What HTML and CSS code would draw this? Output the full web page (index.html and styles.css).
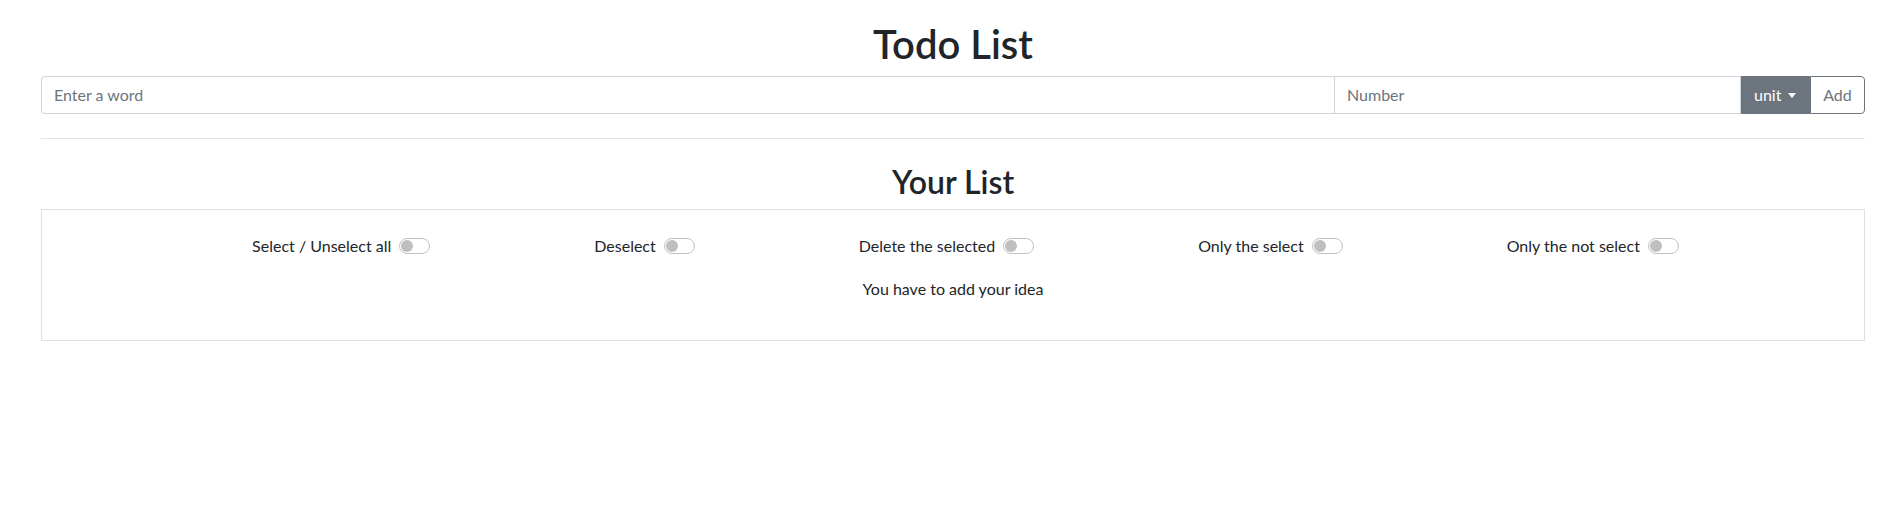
FILE: index.html
```html
<!DOCTYPE html>
<html lang="en">
<head>
<meta charset="utf-8">
<title>Todo List</title>
<link rel="stylesheet" href="styles.css">
</head>
<body>
<div class="container">
  <h1 class="title">Todo List</h1>
  <form class="input-group">
    <input class="form-control word" type="text" placeholder="Enter a word">
    <input class="form-control number" type="text" placeholder="Number">
    <button type="button" class="btn btn-unit">unit<span class="caret"></span></button>
    <button type="button" class="btn btn-add">Add</button>
  </form>
  <hr class="divider">
  <h2 class="subtitle">Your List</h2>
  <div class="card">
    <div class="controls">
      <label class="switch-item">Select / Unselect all <span class="switch"><span class="knob"></span></span></label>
      <label class="switch-item">Deselect <span class="switch"><span class="knob"></span></span></label>
      <label class="switch-item">Delete the selected <span class="switch"><span class="knob"></span></span></label>
      <label class="switch-item">Only the select <span class="switch"><span class="knob"></span></span></label>
      <label class="switch-item">Only the not select <span class="switch"><span class="knob"></span></span></label>
    </div>
    <p class="empty">You have to add your idea</p>
  </div>
</div>
</body>
</html>
```
FILE: styles.css
```css
* { box-sizing: border-box; }
html, body { margin: 0; padding: 0; background: #fff; }
body {
  font-family: Lato, "Liberation Sans", sans-serif;
  font-size: 16px;
  line-height: 24px;
  color: #212529;
}
.container {
  padding: 20px 20px 0 41px;
}
.title {
  margin: 0 0 8px;
  font-size: 40px;
  line-height: 48px;
  font-weight: 600;
  text-align: center;
}
.input-group {
  display: flex;
  height: 38px;
  margin: 0;
}
.form-control {
  font: inherit;
  height: 38px;
  padding: 5px 12px 7px;
  border: 1px solid #ced4da;
  color: #495057;
  background: #fff;
  outline: none;
}
.form-control::placeholder { color: #6c757d; opacity: 1; }
.word {
  flex: 1;
  min-width: 0;
  border-radius: 4px 0 0 4px;
}
.number {
  width: 407px;
  margin-left: -1px;
  border-radius: 0;
}
.btn {
  font: inherit;
  height: 38px;
  padding: 6px 12px;
  border: 1px solid #6c757d;
  cursor: pointer;
  white-space: nowrap;
}
.btn-unit {
  width: 69px;
  background: #6c757d;
  color: #fff;
  border-radius: 0;
  display: flex;
  align-items: center;
}
.caret {
  display: inline-block;
  margin-left: 7px;
  width: 0;
  height: 0;
  border-top: 5px solid #fff;
  border-left: 4.5px solid transparent;
  border-right: 4.5px solid transparent;
}
.btn-add {
  width: 55px;
  background: #fff;
  color: #6c757d;
  border-radius: 0 4px 4px 0;
}
.divider {
  margin: 24px 0 0;
  border: 0;
  border-top: 1px solid #e4e4e4;
  height: 0;
}
.subtitle {
  margin: 24px 0 8px;
  font-size: 32px;
  line-height: 38px;
  font-weight: 600;
  text-align: center;
}
.card {
  border: 1px solid #e0e0e0;
  padding: 24px 20px 39px;
}
.controls {
  display: flex;
  justify-content: center;
  gap: 164px;
  padding-left: 25px;
  margin-bottom: 19px;
}
.switch-item {
  display: flex;
  align-items: center;
  gap: 8px;
  white-space: nowrap;
}
.switch {
  position: relative;
  display: inline-block;
  width: 31px;
  height: 16px;
  border: 1px solid #c2c2c2;
  border-radius: 8px;
  background: #fff;
}
.knob {
  position: absolute;
  left: 1px;
  top: 1px;
  width: 12px;
  height: 12px;
  border-radius: 50%;
  background: #bfbfbf;
}
.empty {
  margin: 0;
  text-align: center;
}
```
